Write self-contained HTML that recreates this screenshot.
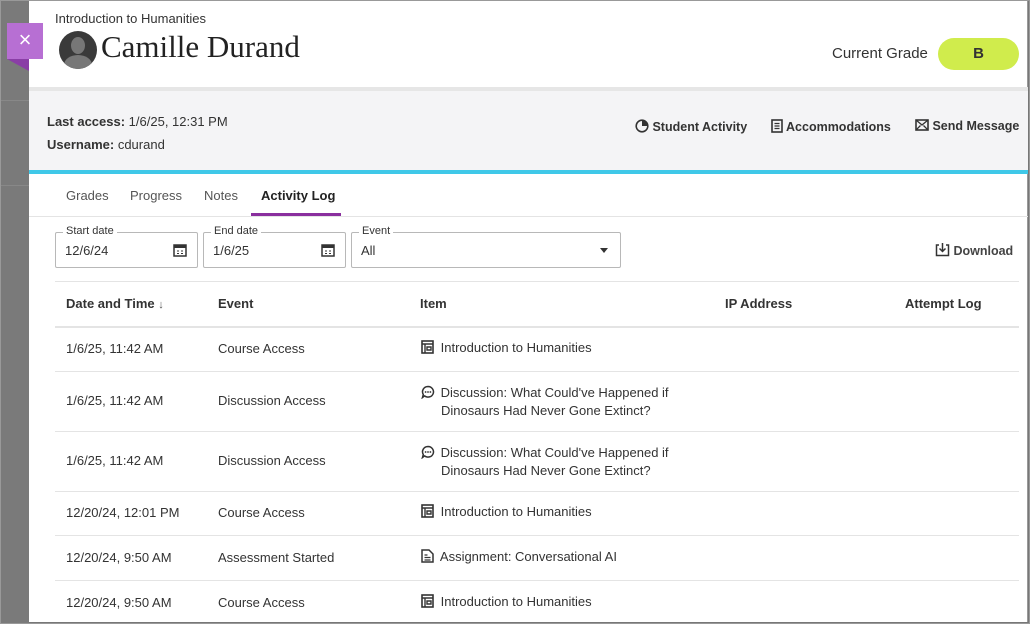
<!DOCTYPE html>
<html><head><meta charset="utf-8"><style>
*{margin:0;padding:0;box-sizing:border-box}
body{width:1030px;height:624px;overflow:hidden;background:#777;font-family:"Liberation Sans",sans-serif;color:#333;position:relative}
.a{position:absolute}
.modal{position:absolute;left:29px;top:0;width:999px;height:622px;background:#fff;border-right:1px solid #999}
.t{font-size:13px;color:#333;white-space:nowrap}
.hd{font-size:13px;font-weight:bold;color:#333}
.hr{position:absolute;left:26px;width:964px;height:1px;background:#e4e4e4}
.fld{position:absolute;top:232px;height:36px;border:1px solid #b8b8b8;border-radius:2px;font-size:13px;padding:10px 9px}
.fld .lb{position:absolute;top:-8px;left:7px;background:#fff;padding:0 3px;font-size:11px;color:#333}
</style></head><body>
<div class="a" style="left:0;top:0;width:29px;height:624px;background:#7a7a7a"></div>
<div class="a" style="left:0;top:100px;width:29px;height:1px;background:#888"></div>
<div class="a" style="left:0;top:185px;width:29px;height:1px;background:#888"></div>
<div class="modal">
  <div class="a t" style="left:26px;top:11px;font-size:13px">Introduction to Humanities</div>
  <div class="a" style="left:30px;top:31px;width:38px;height:38px;border-radius:50%;background:#3a3a3a;overflow:hidden">
    <div class="a" style="left:12px;top:6px;width:14px;height:17px;border-radius:50%;background:#777"></div>
    <div class="a" style="left:5px;top:24px;width:28px;height:20px;border-radius:50%;background:#777"></div>
  </div>
  <div class="a" style="left:72px;top:29px;font-family:'Liberation Serif',serif;font-size:31px;color:#222">Camille Durand</div>
  <div class="a" style="left:803px;top:45px;font-size:15px;color:#333">Current Grade</div>
  <div class="a" style="left:909px;top:38px;width:81px;height:32px;border-radius:16px;background:#d0ec4c;text-align:center;line-height:32px;font-size:15px;font-weight:bold;color:#333">B</div>
  <div class="a" style="left:0;top:87px;width:999px;height:83px;background:#f4f4f6;border-top:4px solid #e6e6e6"></div>
  <div class="a" style="left:0;top:170px;width:999px;height:4px;background:#3fc8e8"></div>
  <div class="a t" style="left:18px;top:114px"><b>Last access:</b> 1/6/25, 12:31 PM</div>
  <div class="a t" style="left:18px;top:137px"><b>Username:</b> cdurand</div>
  <div class="a t" style="left:606px;top:119px;font-weight:bold;font-size:12.5px"><svg width="14" height="14" viewBox="0 0 14 14" style="vertical-align:-2px"><circle cx="7" cy="7" r="5.8" fill="none" stroke="#333" stroke-width="1.6"/><path d="M7 7V1.5A5.5 5.5 0 0 1 12.5 7Z" fill="#333"/></svg> Student Activity</div>
  <div class="a t" style="left:742px;top:119px;font-weight:bold;font-size:12.5px"><svg width="12" height="14" viewBox="0 0 12 14" style="vertical-align:-2px"><rect x="1" y="1" width="10" height="12" fill="none" stroke="#333" stroke-width="1.6"/><path d="M3.5 4.5h5M3.5 7h5M3.5 9.5h5" stroke="#333" stroke-width="1.3"/></svg> Accommodations</div>
  <div class="a t" style="left:886px;top:119px;font-weight:bold;font-size:12.5px"><svg width="14" height="12" viewBox="0 0 14 12" style="vertical-align:-1px"><rect x="1" y="1" width="12" height="10" fill="none" stroke="#333" stroke-width="1.6"/><path d="M1 1l6 5 6-5M1 11l4.5-4.5M13 11L8.5 6.5" fill="none" stroke="#333" stroke-width="1.3"/></svg> Send Message</div>
  <div class="a t" style="left:37px;top:188px;color:#555">Grades</div>
  <div class="a t" style="left:101px;top:188px;color:#555">Progress</div>
  <div class="a t" style="left:175px;top:188px;color:#555">Notes</div>
  <div class="a t" style="left:232px;top:188px;font-weight:bold;color:#222">Activity Log</div>
  <div class="a" style="left:222px;top:213px;width:90px;height:3px;background:#8a2f9e"></div>
  <div class="a" style="left:0;top:216px;width:999px;height:1px;background:#e4e4e4"></div>
  <div class="fld" style="left:26px;width:143px"><span class="lb">Start date</span>12/6/24<svg class="a" style="right:10px;top:10px" width="14" height="14" viewBox="0 0 14 14"><rect x="1" y="2" width="12" height="11" fill="none" stroke="#333" stroke-width="1.5"/><rect x="1" y="2" width="12" height="3" fill="#333"/><path d="M4 8h2M8 8h2M4 10.5h2M8 10.5h2" stroke="#333"/></svg></div>
  <div class="fld" style="left:174px;width:143px"><span class="lb">End date</span>1/6/25<svg class="a" style="right:10px;top:10px" width="14" height="14" viewBox="0 0 14 14"><rect x="1" y="2" width="12" height="11" fill="none" stroke="#333" stroke-width="1.5"/><rect x="1" y="2" width="12" height="3" fill="#333"/><path d="M4 8h2M8 8h2M4 10.5h2M8 10.5h2" stroke="#333"/></svg></div>
  <div class="fld" style="left:322px;width:270px"><span class="lb">Event</span>All<div class="a" style="right:12px;top:15px;border:4px solid transparent;border-top:5px solid #333"></div></div>
  <div class="a t" style="left:906px;top:242px;font-weight:bold;color:#444;font-size:12.5px"><svg width="15" height="15" viewBox="0 0 15 15" style="vertical-align:-2px"><path d="M4 3H1.5v10.5h12V3H11M7.5 1v8M4.5 6.5l3 3 3-3" fill="none" stroke="#333" stroke-width="1.5"/></svg> Download</div>
  <div class="hr" style="top:281px"></div>
  <div class="a hd" style="left:37px;top:296px">Date and Time <span style="font-size:11px;color:#555">&#8595;</span></div>
  <div class="a hd" style="left:189px;top:296px">Event</div>
  <div class="a hd" style="left:391px;top:296px">Item</div>
  <div class="a hd" style="left:696px;top:296px">IP Address</div>
  <div class="a hd" style="left:876px;top:296px">Attempt Log</div>
  <div class="hr" style="top:326px;height:2px"></div>
  <div class="hr" style="top:371px"></div>
  <div class="hr" style="top:431px"></div>
  <div class="hr" style="top:491px"></div>
  <div class="hr" style="top:535px"></div>
  <div class="hr" style="top:580px"></div>
  <div class="a t" style="left:37px;top:341px">1/6/25, 11:42 AM</div><div class="a t" style="left:189px;top:341px">Course Access</div>
  <div class="a t" style="left:37px;top:393px">1/6/25, 11:42 AM</div><div class="a t" style="left:189px;top:393px">Discussion Access</div>
  <div class="a t" style="left:37px;top:453px">1/6/25, 11:42 AM</div><div class="a t" style="left:189px;top:453px">Discussion Access</div>
  <div class="a t" style="left:37px;top:505px">12/20/24, 12:01 PM</div><div class="a t" style="left:189px;top:505px">Course Access</div>
  <div class="a t" style="left:37px;top:550px">12/20/24, 9:50 AM</div><div class="a t" style="left:189px;top:550px">Assessment Started</div>
  <div class="a t" style="left:37px;top:595px">12/20/24, 9:50 AM</div><div class="a t" style="left:189px;top:595px">Course Access</div>
  <div class="a t" style="left:392px;top:340px"><svg width="13" height="14" viewBox="0 0 13 14" style="vertical-align:-2px;margin-right:3px"><rect x="1" y="1" width="11" height="12" fill="none" stroke="#333" stroke-width="1.6"/><path d="M1 4h11M4 4v9M6 7h4v3H6z" fill="none" stroke="#333" stroke-width="1.4"/></svg> Introduction to Humanities</div>
  <div class="a t" style="left:392px;top:384px;line-height:18px"><svg width="14" height="14" viewBox="0 0 14 14" style="vertical-align:-2px;margin-right:2px"><path d="M7 1.5a5.5 5.3 0 1 1-3.5 9.4L1.5 12.5l.8-3A5.5 5.3 0 0 1 7 1.5z" fill="none" stroke="#333" stroke-width="1.5"/><circle cx="4.6" cy="7" r=".9" fill="#333"/><circle cx="7" cy="7" r=".9" fill="#333"/><circle cx="9.4" cy="7" r=".9" fill="#333"/></svg> Discussion: What Could've Happened if<br><span style="padding-left:20px">Dinosaurs Had Never Gone Extinct?</span></div>
  <div class="a t" style="left:392px;top:444px;line-height:18px"><svg width="14" height="14" viewBox="0 0 14 14" style="vertical-align:-2px;margin-right:2px"><path d="M7 1.5a5.5 5.3 0 1 1-3.5 9.4L1.5 12.5l.8-3A5.5 5.3 0 0 1 7 1.5z" fill="none" stroke="#333" stroke-width="1.5"/><circle cx="4.6" cy="7" r=".9" fill="#333"/><circle cx="7" cy="7" r=".9" fill="#333"/><circle cx="9.4" cy="7" r=".9" fill="#333"/></svg> Discussion: What Could've Happened if<br><span style="padding-left:20px">Dinosaurs Had Never Gone Extinct?</span></div>
  <div class="a t" style="left:392px;top:504px"><svg width="13" height="14" viewBox="0 0 13 14" style="vertical-align:-2px;margin-right:3px"><rect x="1" y="1" width="11" height="12" fill="none" stroke="#333" stroke-width="1.6"/><path d="M1 4h11M4 4v9M6 7h4v3H6z" fill="none" stroke="#333" stroke-width="1.4"/></svg> Introduction to Humanities</div>
  <div class="a t" style="left:392px;top:549px"><svg width="13" height="14" viewBox="0 0 13 14" style="vertical-align:-2px;margin-right:3px"><path d="M1 1h7l4 4v8H1z" fill="none" stroke="#333" stroke-width="1.5"/><path d="M3.5 6h3M3.5 8.5h6M3.5 11h6" stroke="#333" stroke-width="1.2"/></svg> Assignment: Conversational AI</div>
  <div class="a t" style="left:392px;top:594px"><svg width="13" height="14" viewBox="0 0 13 14" style="vertical-align:-2px;margin-right:3px"><rect x="1" y="1" width="11" height="12" fill="none" stroke="#333" stroke-width="1.6"/><path d="M1 4h11M4 4v9M6 7h4v3H6z" fill="none" stroke="#333" stroke-width="1.4"/></svg> Introduction to Humanities</div>
</div>
<div class="a" style="left:7px;top:23px;width:36px;height:36px;background:#b76fd3;color:#fff;font-size:22px;text-align:center;line-height:34px">&#215;</div>
<div class="a" style="left:7px;top:59px;border-left:22px solid transparent;border-top:12px solid #8a3ea6"></div>
<div class="a" style="left:0;top:0;width:1030px;height:624px;border:1px solid #999;pointer-events:none"></div>
</body></html>
